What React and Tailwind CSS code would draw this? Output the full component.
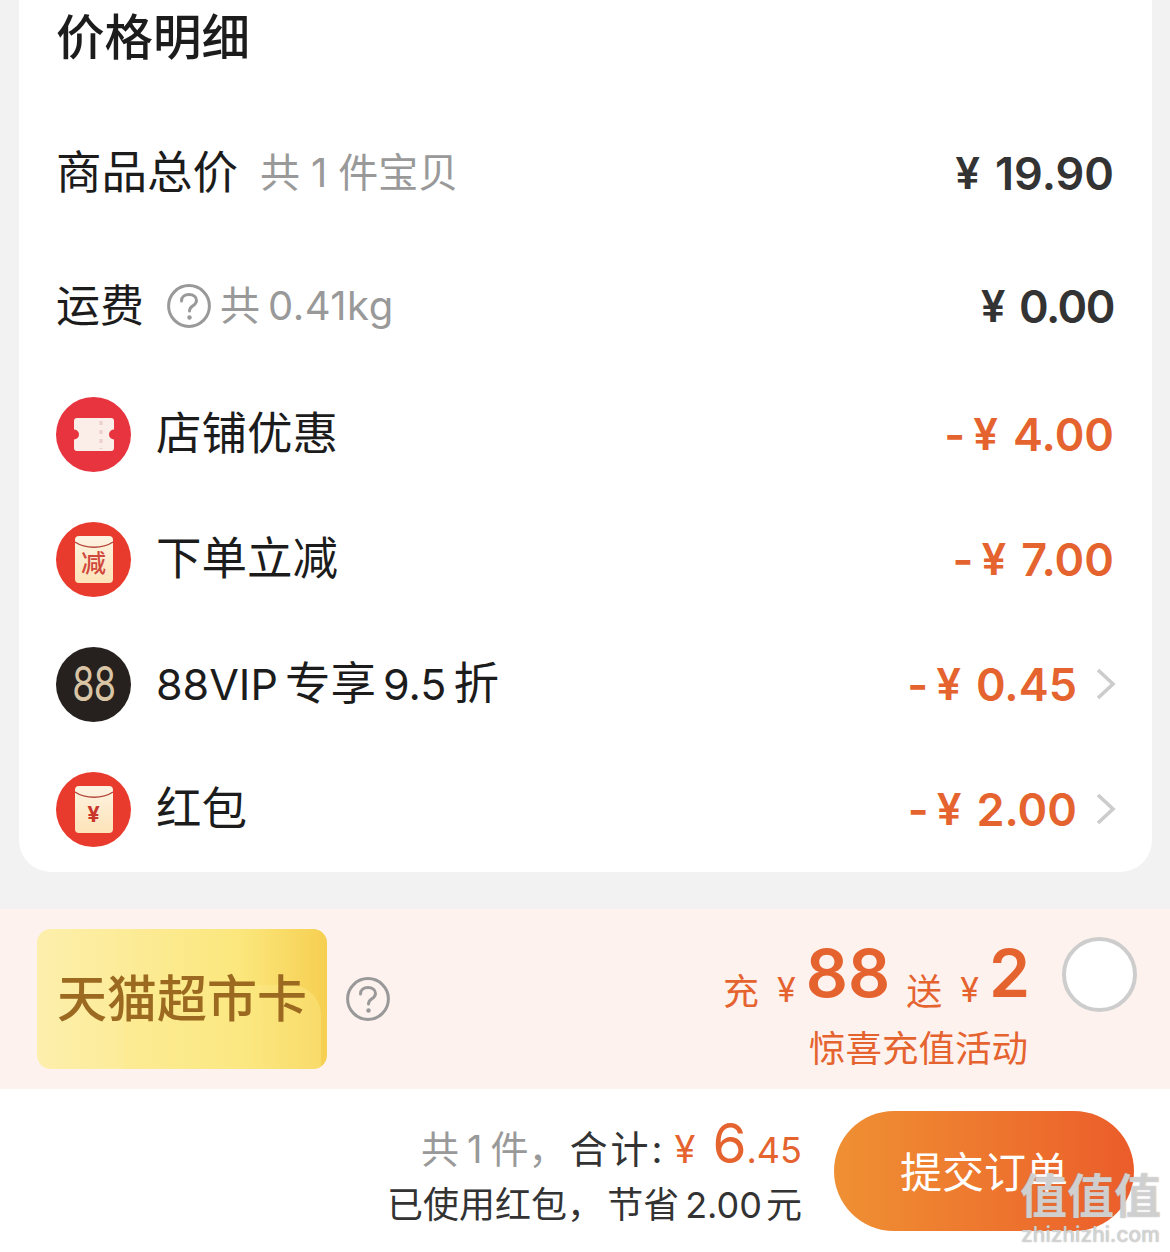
const font = "font-['Inter','Noto_Sans_CJK_SC',sans-serif]";

const HelpIcon = ({ size = 44 }) => (
  <svg width={size} height={size} viewBox="0 0 44 44" fill="none" className="shrink-0">
    <circle cx="22" cy="22" r="20.400" stroke="#999999" strokeWidth="3" />
    <path d="M14.500 17c0-4 3.200-6.500 7.500-6.500s7.500 2.400 7.500 6c0 2.800-1.800 4.200-3.900 5.600-2 1.300-3.100 2.400-3.100 5" stroke="#999999" strokeWidth="3" strokeLinecap="round" />
    <circle cx="22.500" cy="33.500" r="2.200" fill="#999999" />
  </svg>
);

const Chevron = () => (
  <svg width="20" height="32" viewBox="0 0 20 32" fill="none" className="shrink-0 -mr-[2px] ml-[19px]">
    <path d="M2 2l15 14L2 30" stroke="#cccccc" strokeWidth="3.600" />
  </svg>
);

const TicketIcon = () => (
  <div className="w-[75px] h-[75px] rounded-full bg-[#e7343f] flex items-center justify-center shrink-0">
    <svg width="40" height="33" viewBox="0 0 40 33" fill="none">
      <path d="M3 0h34a3 3 0 0 1 3 3v8.500a5 5 0 0 0 0 10V30a3 3 0 0 1-3 3H3a3 3 0 0 1-3-3v-8.500a5 5 0 0 0 0-10V3a3 3 0 0 1 3-3z" fill="#fbeee8" />
      <path d="M27 3v28" stroke="#eccfca" strokeWidth="3" strokeDasharray="4 5" />
    </svg>
  </div>
);

const Envelope = ({ children }) => (
  <div className="w-[75px] h-[75px] rounded-full bg-[#e93b2d] flex items-center justify-center shrink-0">
    <div className="relative w-[38px] h-[47px] rounded-[4px] bg-gradient-to-b from-[#fdf3e2] to-[#fde3b8] flex items-center justify-center pt-[9px]">
      <svg width="38" height="10" viewBox="0 0 38 10" fill="none" className="absolute top-[5px] left-0">
        <path d="M0 1c10 7 28 7 38 0" stroke="#b5443a" strokeWidth="1.400" />
      </svg>
      {children}
    </div>
  </div>
);

const VipIcon = () => (
  <div className="w-[75px] h-[75px] rounded-full bg-[#26211f] flex items-center justify-center shrink-0">
    <span className="font-['Inter',sans-serif] font-normal text-[48px] leading-none tracking-[-1px] text-[#d9c5a5] scale-x-75">88</span>
  </div>
);

const Amount = ({ value, discount, tight }) => (
  <span className={`flex items-center leading-none font-semibold text-[45px] ${discount ? "text-[#e5632f]" : "text-[#333333]"} ${tight ? "tracking-[-1.500px]" : ""}`}>
    {discount && <span className="mr-[8px]">-</span>}
    <span className="mr-[15px] text-[44px]">¥</span>
    {value}
  </span>
);

const DiscountRow = ({ icon, label, value, arrow }) => (
  <div className="flex items-center h-[125px]">
    {icon}
    <span className="ml-[25px] flex items-center text-[45.500px] leading-none text-[#1c1c1c]">{label}</span>
    <div className="ml-auto flex items-center">
      <Amount value={value} discount />
      {arrow && <Chevron />}
    </div>
  </div>
);

export default function App() {
  return (
    <div className={`${font} w-[1170px] h-[1252px] overflow-hidden flex flex-col bg-[#f2f2f3]`}>
      <div className="mx-[19px] w-[1133px] h-[871.5px] bg-white rounded-b-[32px] pl-[37px] pr-[38px] shrink-0">
        <div className="h-[105.500px]">
          <h2 className="text-[48.500px] leading-[76px] font-medium text-[#1c1c1c]">价格明细</h2>
        </div>
        <div className="flex items-center h-[135px]">
          <span className="text-[45.500px] leading-none text-[#1c1c1c]">商品总价</span>
          <span className="ml-[22px] text-[40px] leading-none text-[#999999]">
            共<span className="mx-[11px]">1</span>件宝贝
          </span>
          <div className="ml-auto"><Amount value="19.90" /></div>
        </div>
        <div className="flex items-center h-[131px]">
          <span className="text-[44px] leading-none text-[#1c1c1c]">运费</span>
          <span className="ml-[23px]"><HelpIcon /></span>
          <span className="ml-[9px] text-[40px] leading-none text-[#999999]">
            共<span className="ml-[8px] tracking-[0.500px]">0.41kg</span>
          </span>
          <div className="ml-auto"><Amount value="0.00" tight /></div>
        </div>
        <DiscountRow icon={<TicketIcon />} label="店铺优惠" value="4.00" />
        <DiscountRow
          icon={<Envelope><span className="text-[25px] leading-none font-medium text-[#d0493c]">减</span></Envelope>}
          label="下单立减"
          value="7.00"
        />
        <DiscountRow
          icon={<VipIcon />}
          label={
            <>
              <span className="text-[43px]">88VIP</span>
              <span className="ml-[7px]">专享</span>
              <span className="ml-[7px] text-[43px]">9.5</span>
              <span className="ml-[7px]">折</span>
            </>
          }
          value="0.45"
          arrow
        />
        <DiscountRow
          icon={<Envelope><span className="text-[22px] leading-none font-bold text-[#c9362c]">¥</span></Envelope>}
          label="红包"
          value="2.00"
          arrow
        />
      </div>

      <div className="mt-[37.500px] h-[180px] bg-[#fdf2ee] shrink-0 flex items-center pl-[37px] pr-[33px]">
        <div className="relative w-[290px] h-[140px] rounded-[14px] overflow-hidden bg-gradient-to-r from-[#fdefac] via-[#fbe77c] via-70% to-[#f6cf50] flex items-center justify-center">
          <div className="absolute left-[86px] top-[56px] w-[198px] h-[100px] rounded-tr-[30px] bg-[#fdec8c]/40" />
          <span className="relative text-[50px] leading-none font-medium text-[#9b6a20]">天猫超市卡</span>
        </div>
        <span className="ml-[19px]"><HelpIcon /></span>
        <div className="ml-auto flex flex-col items-end pt-[10px] text-[#e5632f]">
          <div className="flex items-baseline leading-none">
            <span className="text-[36px] translate-y-[8px]">充</span>
            <span className="ml-[18px] text-[34px] translate-y-[5px]">¥</span>
            <span className="ml-[10px] text-[66px] font-semibold">88</span>
            <span className="ml-[16px] text-[36px] translate-y-[8px]">送</span>
            <span className="ml-[18px] text-[34px] translate-y-[5px]">¥</span>
            <span className="ml-[10px] text-[66px] font-semibold">2</span>
          </div>
          <span className="mt-[25px] mr-[2px] text-[36.500px] leading-none">惊喜充值活动</span>
        </div>
        <div className="ml-[32px] w-[75px] h-[75px] rounded-full bg-white border-[4px] border-[#cdcdcd] shrink-0 -mt-[50px]" />
      </div>

      <div className="relative flex-1 bg-white flex items-center justify-end pr-[36px] pt-[1px]">
        <div className="flex flex-col items-end pb-[3px]">
          <div className="flex items-baseline leading-none text-[38px]">
            <span className="mr-[3px] text-[#999999]">
              共<span className="mx-[8px]">1</span>件，
            </span>
            <span className="tracking-[3px] text-[#333333]">合计:</span>
            <span className="ml-[9px] text-[#e5632f]">¥</span>
            <span className="ml-[17px] text-[55px] text-[#e5632f]">6</span>
            <span className="text-[36px] text-[#e5632f]">.45</span>
          </div>
          <span className="mt-[16px] flex items-center text-[36px] leading-none text-[#333333]">
            已使用红包，
            <span className="ml-[4px]">节省</span>
            <span className="ml-[6px]">2.00</span>
            <span className="ml-[4px]">元</span>
          </span>
        </div>
        <button className="ml-[32px] w-[300px] h-[120px] pt-[3px] rounded-full bg-gradient-to-r from-[#ef9033] to-[#eb5c2a] text-white text-[42px] leading-none">
          提交订单
        </button>
        <div className="absolute left-[1020px] top-[80px] flex flex-col items-center whitespace-nowrap text-white/60 leading-none [text-shadow:0_0_1px_#8a8a8a] font-['Noto_Sans_CJK_SC',sans-serif]">
          <span className="text-[47px] font-bold">值值值</span>
          <span className="text-[21px] mt-[8px] font-['Inter',sans-serif] font-medium">zhizhizhi.com</span>
        </div>
      </div>
    </div>
  );
}
